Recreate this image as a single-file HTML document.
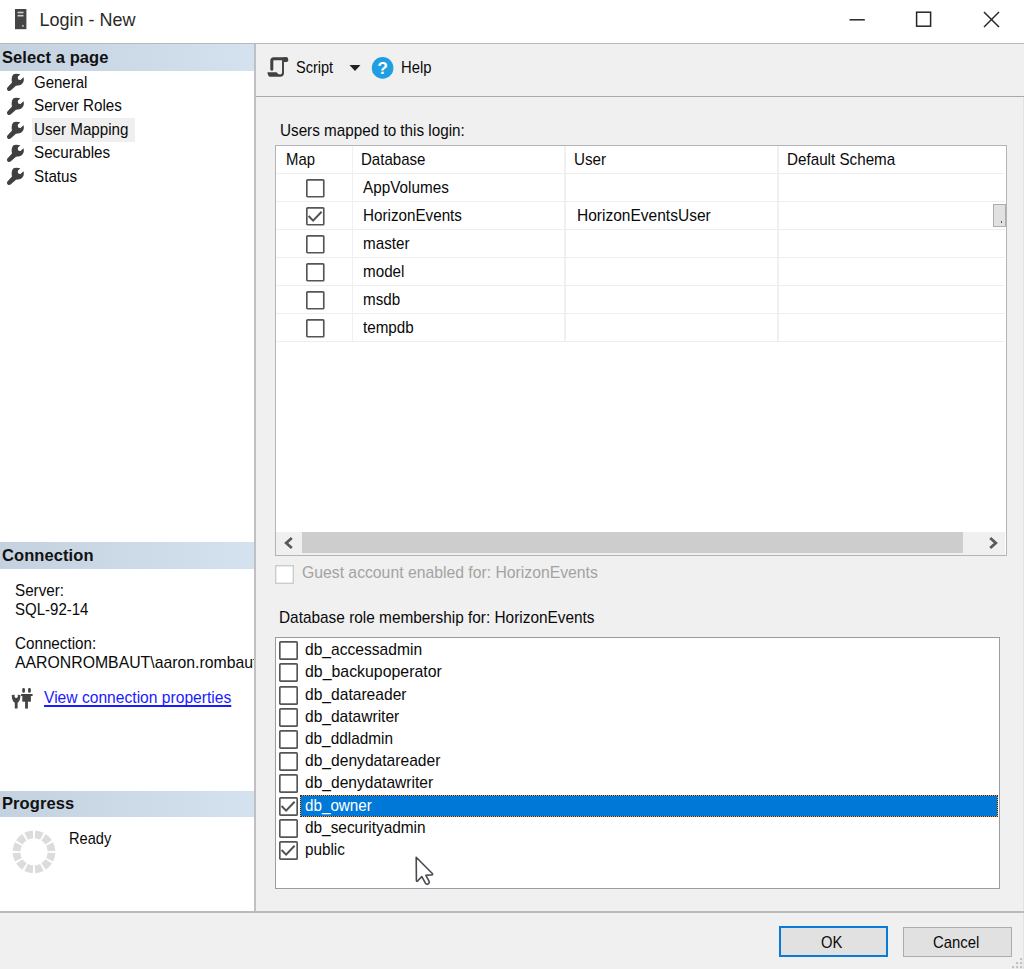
<!DOCTYPE html>
<html><head><meta charset="utf-8"><style>
html,body{margin:0;padding:0;width:1024px;height:969px;overflow:hidden;background:#f0f0f0;position:relative}
body *{position:absolute}
#root{left:0;top:0;width:1024px;height:969px;background:#f0f0f0}
.t{font-family:"Liberation Sans",sans-serif;white-space:nowrap}
svg{overflow:visible}
</style></head><body><div id="root">
<div style="left:0px;top:0px;width:1024px;height:43px;background:#fff"></div>
<div style="left:0px;top:43px;width:1024px;height:1px;background:#b9b9b9"></div>
<svg style="left:14px;top:9px" width="14" height="21" viewBox="0 0 14 21"><rect x="1" y="0" width="11.4" height="20.2" fill="#444"/><rect x="3.6" y="2.7" width="5.9" height="1.6" fill="#d0d0d0"/><rect x="3.6" y="5.9" width="5.9" height="1.6" fill="#d0d0d0"/><rect x="7.9" y="15.9" width="2" height="2" fill="#a0a0a0"/></svg>
<div class="t" style="left:39.5px;top:9.21px;font-size:18px;line-height:22.5px;letter-spacing:0px;color:#2a2a2a;">Login - New</div>
<svg style="left:840px;top:0px" width="184" height="43" viewBox="840 0 184 43"><line x1="849.5" y1="19.8" x2="864.8" y2="19.8" stroke="#262626" stroke-width="1.5"/><rect x="916.6" y="12.2" width="14" height="14" fill="none" stroke="#262626" stroke-width="1.5"/><line x1="984" y1="12" x2="999" y2="27" stroke="#262626" stroke-width="1.5"/><line x1="999" y1="12" x2="984" y2="27" stroke="#262626" stroke-width="1.5"/></svg>
<div style="left:0px;top:44px;width:254px;height:868px;background:#fff"></div>
<div style="left:254.2px;top:44px;width:1.7px;height:868px;background:#c0c0c4"></div>
<div style="left:0px;top:44px;width:254px;height:26.5px;background:linear-gradient(to right,#c4d1df,#d4e1ef)"></div>
<div class="t" style="left:2px;top:46.57px;font-size:16.5px;line-height:20.625px;letter-spacing:0.08px;color:#111;font-weight:bold;">Select a page</div>
<svg style="left:0px;top:68.00px" width="30" height="30" viewBox="0 68 30 30"><path d="M13.2 74.6 C14.5 73.5 17 73.4 20.4 74.3 L18 76.5 C17.2 78.5 18.5 80.5 20.5 80 L23.5 77.3 C24.5 80.5 23.5 84 19.5 85.3 L16 85.7 L10.6 90.6 C9.4 91.5 7.2 91 7 89.2 C6.9 88.3 7.3 87.4 7.9 86.9 L12 82.6 C11.4 80 11.5 76.6 13.2 74.6 Z" fill="#404040"/></svg>
<div class="t" style="left:34px;top:71.58px;font-size:17px;line-height:21.25px;letter-spacing:0px;color:#0a0a0a;transform:scaleX(0.883);transform-origin:0 0;">General</div>
<svg style="left:0px;top:91.70px" width="30" height="30" viewBox="0 68 30 30"><path d="M13.2 74.6 C14.5 73.5 17 73.4 20.4 74.3 L18 76.5 C17.2 78.5 18.5 80.5 20.5 80 L23.5 77.3 C24.5 80.5 23.5 84 19.5 85.3 L16 85.7 L10.6 90.6 C9.4 91.5 7.2 91 7 89.2 C6.9 88.3 7.3 87.4 7.9 86.9 L12 82.6 C11.4 80 11.5 76.6 13.2 74.6 Z" fill="#404040"/></svg>
<div class="t" style="left:34px;top:95.28px;font-size:17px;line-height:21.25px;letter-spacing:0px;color:#0a0a0a;transform:scaleX(0.895);transform-origin:0 0;">Server Roles</div>
<div style="left:31.5px;top:118.3px;width:103.5px;height:23.4px;background:#efefef"></div>
<svg style="left:0px;top:115.60px" width="30" height="30" viewBox="0 68 30 30"><path d="M13.2 74.6 C14.5 73.5 17 73.4 20.4 74.3 L18 76.5 C17.2 78.5 18.5 80.5 20.5 80 L23.5 77.3 C24.5 80.5 23.5 84 19.5 85.3 L16 85.7 L10.6 90.6 C9.4 91.5 7.2 91 7 89.2 C6.9 88.3 7.3 87.4 7.9 86.9 L12 82.6 C11.4 80 11.5 76.6 13.2 74.6 Z" fill="#404040"/></svg>
<div class="t" style="left:34px;top:119.18px;font-size:17px;line-height:21.25px;letter-spacing:0px;color:#0a0a0a;transform:scaleX(0.893);transform-origin:0 0;">User Mapping</div>
<svg style="left:0px;top:138.90px" width="30" height="30" viewBox="0 68 30 30"><path d="M13.2 74.6 C14.5 73.5 17 73.4 20.4 74.3 L18 76.5 C17.2 78.5 18.5 80.5 20.5 80 L23.5 77.3 C24.5 80.5 23.5 84 19.5 85.3 L16 85.7 L10.6 90.6 C9.4 91.5 7.2 91 7 89.2 C6.9 88.3 7.3 87.4 7.9 86.9 L12 82.6 C11.4 80 11.5 76.6 13.2 74.6 Z" fill="#404040"/></svg>
<div class="t" style="left:34px;top:142.48px;font-size:17px;line-height:21.25px;letter-spacing:0px;color:#0a0a0a;transform:scaleX(0.895);transform-origin:0 0;">Securables</div>
<svg style="left:0px;top:162.40px" width="30" height="30" viewBox="0 68 30 30"><path d="M13.2 74.6 C14.5 73.5 17 73.4 20.4 74.3 L18 76.5 C17.2 78.5 18.5 80.5 20.5 80 L23.5 77.3 C24.5 80.5 23.5 84 19.5 85.3 L16 85.7 L10.6 90.6 C9.4 91.5 7.2 91 7 89.2 C6.9 88.3 7.3 87.4 7.9 86.9 L12 82.6 C11.4 80 11.5 76.6 13.2 74.6 Z" fill="#404040"/></svg>
<div class="t" style="left:34px;top:165.98px;font-size:17px;line-height:21.25px;letter-spacing:0px;color:#0a0a0a;transform:scaleX(0.895);transform-origin:0 0;">Status</div>
<div style="left:0px;top:542px;width:254px;height:26.5px;background:linear-gradient(to right,#c4d1df,#d4e1ef)"></div>
<div class="t" style="left:2px;top:545.07px;font-size:16.5px;line-height:20.625px;letter-spacing:0.08px;color:#111;font-weight:bold;">Connection</div>
<div class="t" style="left:15px;top:580.08px;font-size:17px;line-height:21.25px;letter-spacing:0px;color:#0a0a0a;transform:scaleX(0.895);transform-origin:0 0;">Server:</div>
<div class="t" style="left:15px;top:599.18px;font-size:17px;line-height:21.25px;letter-spacing:0px;color:#0a0a0a;transform:scaleX(0.883);transform-origin:0 0;">SQL-92-14</div>
<div class="t" style="left:15px;top:632.88px;font-size:17px;line-height:21.25px;letter-spacing:0px;color:#0a0a0a;transform:scaleX(0.895);transform-origin:0 0;">Connection:</div>
<div style="left:0;top:650px;width:254px;height:30px;overflow:hidden">
<div class="t" style="left:15px;top:1.88px;font-size:17px;line-height:21.25px;letter-spacing:0px;color:#0a0a0a;transform:scaleX(0.93);transform-origin:0 0;">AARONROMBAUT\aaron.rombaut</div>
</div>
<svg style="left:6px;top:682px" width="34" height="32" viewBox="6 682 34 32"><path d="M11.8 695 L14.6 694.8 L14.6 697 Q16.2 699.2 17.8 697 L17.8 694.8 L20.4 695 C20.6 699 19.2 701.8 17.6 702.8 L17.6 708.6 L14.8 708.6 L14.8 702.8 C13 701.8 11.6 699 11.8 695 Z" fill="#444"/><rect x="22.3" y="688.1" width="2.6" height="4.6" rx="1.2" fill="#444"/><rect x="28.1" y="688.1" width="2.7" height="4.6" rx="1.2" fill="#444"/><rect x="21.1" y="694" width="11.5" height="2" fill="#444"/><rect x="22.3" y="695.5" width="8.6" height="6.2" fill="#444"/><rect x="25.1" y="701" width="2.8" height="7.6" fill="#444"/></svg>
<div class="t" style="left:44.4px;top:686.58px;font-size:17px;line-height:21.25px;letter-spacing:0px;color:#1a1aff;transform:scaleX(0.919);transform-origin:0 0;text-decoration:underline;text-underline-offset:2.2px;text-decoration-thickness:1.6px;text-decoration-skip-ink:none">View connection properties</div>
<div style="left:0px;top:790.5px;width:254px;height:26.100000000000023px;background:linear-gradient(to right,#c4d1df,#d4e1ef)"></div>
<div class="t" style="left:2px;top:793.17px;font-size:16.5px;line-height:20.625px;letter-spacing:0.08px;color:#111;font-weight:bold;">Progress</div>
<svg style="left:0;top:820px" width="70" height="70" viewBox="0 820 70 70"><path d="M55.37 853.09 A21.4 21.4 0 0 1 53.10 861.55 L46.14 858.03 A13.6 13.6 0 0 0 47.58 852.66 Z" fill="#dcdcdc"/><path d="M51.91 863.62 A21.4 21.4 0 0 1 45.72 869.81 L41.45 863.28 A13.6 13.6 0 0 0 45.38 859.35 Z" fill="#dcdcdc"/><path d="M43.65 871.00 A21.4 21.4 0 0 1 35.19 873.27 L34.76 865.48 A13.6 13.6 0 0 0 40.13 864.04 Z" fill="#dcdcdc"/><path d="M32.81 873.27 A21.4 21.4 0 0 1 24.35 871.00 L27.87 864.04 A13.6 13.6 0 0 0 33.24 865.48 Z" fill="#dcdcdc"/><path d="M22.28 869.81 A21.4 21.4 0 0 1 16.09 863.62 L22.62 859.35 A13.6 13.6 0 0 0 26.55 863.28 Z" fill="#dcdcdc"/><path d="M14.90 861.55 A21.4 21.4 0 0 1 12.63 853.09 L20.42 852.66 A13.6 13.6 0 0 0 21.86 858.03 Z" fill="#dcdcdc"/><path d="M12.63 850.71 A21.4 21.4 0 0 1 14.90 842.25 L21.86 845.77 A13.6 13.6 0 0 0 20.42 851.14 Z" fill="#dcdcdc"/><path d="M16.09 840.18 A21.4 21.4 0 0 1 22.28 833.99 L26.55 840.52 A13.6 13.6 0 0 0 22.62 844.45 Z" fill="#dcdcdc"/><path d="M24.35 832.80 A21.4 21.4 0 0 1 32.81 830.53 L33.24 838.32 A13.6 13.6 0 0 0 27.87 839.76 Z" fill="#dcdcdc"/><path d="M35.19 830.53 A21.4 21.4 0 0 1 43.65 832.80 L40.13 839.76 A13.6 13.6 0 0 0 34.76 838.32 Z" fill="#dcdcdc"/><path d="M45.72 833.99 A21.4 21.4 0 0 1 51.91 840.18 L45.38 844.45 A13.6 13.6 0 0 0 41.45 840.52 Z" fill="#dcdcdc"/><path d="M53.10 842.25 A21.4 21.4 0 0 1 55.37 850.71 L47.58 851.14 A13.6 13.6 0 0 0 46.14 845.77 Z" fill="#dcdcdc"/></svg>
<div class="t" style="left:68.6px;top:828.18px;font-size:17px;line-height:21.25px;letter-spacing:0px;color:#0a0a0a;transform:scaleX(0.86);transform-origin:0 0;">Ready</div>
<div style="left:255.5px;top:44px;width:768.5px;height:52px;background:#f0f0f0"></div>
<div style="left:255.5px;top:96px;width:768.5px;height:1.2px;background:#a9a9a9"></div>
<svg style="left:262px;top:52px" width="34" height="30" viewBox="262 52 34 30"><path d="M271.8 69.3 L271.8 60.8 Q271.8 58.8 273.8 58.8 L286 58.8" fill="none" stroke="#404040" stroke-width="3" stroke-linecap="round"/><rect x="282.6" y="57.3" width="5.6" height="4.6" rx="1.6" fill="#404040"/><path d="M283 60 L283 73" fill="none" stroke="#474747" stroke-width="2"/><path d="M267.4 72.2 L276.6 72.2 Q277.8 74.6 280.2 74.6 Q282 74.6 282 72.5 L284 72.5 Q284 76.8 280 76.8 L270.2 76.8 Q268 76.8 267.4 72.2 Z" fill="#404040"/></svg>
<div class="t" style="left:296px;top:57.08px;font-size:17px;line-height:21.25px;letter-spacing:0px;color:#0a0a0a;transform:scaleX(0.855);transform-origin:0 0;">Script</div>
<svg style="left:348px;top:64px" width="14" height="8" viewBox="0 0 14 8"><path d="M1.5 1 L12.5 1 L7 7 Z" fill="#222"/></svg>
<svg style="left:371px;top:57px" width="23" height="23" viewBox="0 0 23 23"><circle cx="11.6" cy="10.9" r="10.8" fill="#1f9fe2"/><text x="11.8" y="17.3" text-anchor="middle" font-family="Liberation Sans" font-weight="bold" font-size="17" fill="#fff">?</text></svg>
<div class="t" style="left:400.5px;top:57.08px;font-size:17px;line-height:21.25px;letter-spacing:0px;color:#0a0a0a;transform:scaleX(0.87);transform-origin:0 0;">Help</div>
<div class="t" style="left:280.4px;top:120.18px;font-size:17px;line-height:21.25px;letter-spacing:0px;color:#0a0a0a;transform:scaleX(0.897);transform-origin:0 0;">Users mapped to this login:</div>
<div style="left:274.8px;top:144.6px;width:732.0px;height:411.79999999999995px;background:#fff"></div>
<div style="left:276.1px;top:172.8px;width:729.4px;height:1.4px;background:#eeeeee"></div>
<div style="left:276.1px;top:200.8px;width:729.4px;height:1.4px;background:#eeeeee"></div>
<div style="left:276.1px;top:228.8px;width:729.4px;height:1.4px;background:#eeeeee"></div>
<div style="left:276.1px;top:256.8px;width:729.4px;height:1.4px;background:#eeeeee"></div>
<div style="left:276.1px;top:284.8px;width:729.4px;height:1.4px;background:#eeeeee"></div>
<div style="left:276.1px;top:312.8px;width:729.4px;height:1.4px;background:#eeeeee"></div>
<div style="left:276.1px;top:340.8px;width:729.4px;height:1.4px;background:#eeeeee"></div>
<div style="left:351.9px;top:145.9px;width:1.2px;height:195.6px;background:#f0f0f0"></div>
<div style="left:564.4px;top:145.9px;width:1.2px;height:195.6px;background:#f0f0f0"></div>
<div style="left:777.4px;top:145.9px;width:1.2px;height:195.6px;background:#f0f0f0"></div>
<div class="t" style="left:285.5px;top:148.68px;font-size:17px;line-height:21.25px;letter-spacing:0px;color:#0a0a0a;transform:scaleX(0.876);transform-origin:0 0;">Map</div>
<div class="t" style="left:361.2px;top:148.68px;font-size:17px;line-height:21.25px;letter-spacing:0px;color:#0a0a0a;transform:scaleX(0.885);transform-origin:0 0;">Database</div>
<div class="t" style="left:574px;top:148.68px;font-size:17px;line-height:21.25px;letter-spacing:0px;color:#0a0a0a;transform:scaleX(0.895);transform-origin:0 0;">User</div>
<div class="t" style="left:786.6px;top:148.68px;font-size:17px;line-height:21.25px;letter-spacing:0px;color:#0a0a0a;transform:scaleX(0.895);transform-origin:0 0;">Default Schema</div>
<svg style="left:306.2px;top:178.8px" width="18.6" height="18.6" viewBox="0 0 18.6 18.6"><rect x="0.825" y="0.825" width="16.950000000000003" height="16.950000000000003" rx="0.8" fill="none" stroke="#555" stroke-width="1.65"/></svg>
<div class="t" style="left:363px;top:176.88px;font-size:17px;line-height:21.25px;letter-spacing:0px;color:#0a0a0a;transform:scaleX(0.899);transform-origin:0 0;">AppVolumes</div>
<svg style="left:306.2px;top:206.8px" width="18.6" height="18.6" viewBox="0 0 18.6 18.6"><rect x="0.825" y="0.825" width="16.950000000000003" height="16.950000000000003" rx="0.8" fill="none" stroke="#555" stroke-width="1.65"/><path d="M2.6 9 L7.1 13.6 L15.6 4.8" fill="none" stroke="#505050" stroke-width="2"/></svg>
<div class="t" style="left:363px;top:204.88px;font-size:17px;line-height:21.25px;letter-spacing:0px;color:#0a0a0a;transform:scaleX(0.895);transform-origin:0 0;">HorizonEvents</div>
<div class="t" style="left:576.6px;top:204.88px;font-size:17px;line-height:21.25px;letter-spacing:0px;color:#0a0a0a;transform:scaleX(0.913);transform-origin:0 0;">HorizonEventsUser</div>
<div style="left:993.3px;top:204.2px;width:12.5px;height:22.5px;background:#e1e1e1;border:1.2px solid #adadad;box-sizing:border-box"></div>
<div style="left:1000.5px;top:221.0px;width:1.5px;height:1.5px;background:#555"></div>
<svg style="left:306.2px;top:234.8px" width="18.6" height="18.6" viewBox="0 0 18.6 18.6"><rect x="0.825" y="0.825" width="16.950000000000003" height="16.950000000000003" rx="0.8" fill="none" stroke="#555" stroke-width="1.65"/></svg>
<div class="t" style="left:363px;top:232.88px;font-size:17px;line-height:21.25px;letter-spacing:0px;color:#0a0a0a;transform:scaleX(0.895);transform-origin:0 0;">master</div>
<svg style="left:306.2px;top:262.8px" width="18.6" height="18.6" viewBox="0 0 18.6 18.6"><rect x="0.825" y="0.825" width="16.950000000000003" height="16.950000000000003" rx="0.8" fill="none" stroke="#555" stroke-width="1.65"/></svg>
<div class="t" style="left:363px;top:260.88px;font-size:17px;line-height:21.25px;letter-spacing:0px;color:#0a0a0a;transform:scaleX(0.895);transform-origin:0 0;">model</div>
<svg style="left:306.2px;top:290.8px" width="18.6" height="18.6" viewBox="0 0 18.6 18.6"><rect x="0.825" y="0.825" width="16.950000000000003" height="16.950000000000003" rx="0.8" fill="none" stroke="#555" stroke-width="1.65"/></svg>
<div class="t" style="left:363px;top:288.88px;font-size:17px;line-height:21.25px;letter-spacing:0px;color:#0a0a0a;transform:scaleX(0.895);transform-origin:0 0;">msdb</div>
<svg style="left:306.2px;top:318.8px" width="18.6" height="18.6" viewBox="0 0 18.6 18.6"><rect x="0.825" y="0.825" width="16.950000000000003" height="16.950000000000003" rx="0.8" fill="none" stroke="#555" stroke-width="1.65"/></svg>
<div class="t" style="left:363px;top:316.88px;font-size:17px;line-height:21.25px;letter-spacing:0px;color:#0a0a0a;transform:scaleX(0.895);transform-origin:0 0;">tempdb</div>
<div style="left:276.1px;top:531.8px;width:729.4px;height:23px;background:#f0f0f0"></div>
<div style="left:301.6px;top:532.3px;width:661.4px;height:21.2px;background:#cdcdcd"></div>
<svg style="left:281px;top:535px" width="16" height="16" viewBox="0 0 16 16"><path d="M10.8 3 L5.2 8 L10.8 13" fill="none" stroke="#5a5a5a" stroke-width="2.8"/></svg>
<svg style="left:985px;top:535px" width="16" height="16" viewBox="0 0 16 16"><path d="M5.2 3 L10.8 8 L5.2 13" fill="none" stroke="#5a5a5a" stroke-width="2.8"/></svg>
<div style="left:274.8px;top:144.6px;width:732.0px;height:411.79999999999995px;border:1.6px solid #b3b3b8;box-sizing:border-box"></div>
<svg style="left:275px;top:564.5px" width="19" height="19" viewBox="0 0 19 19"><rect x="0.7" y="0.7" width="17.6" height="17.6" fill="#fff" stroke="#cccccc" stroke-width="1.4"/></svg>
<div class="t" style="left:302px;top:561.98px;font-size:17px;line-height:21.25px;letter-spacing:0px;color:#a3a3a3;transform:scaleX(0.926);transform-origin:0 0;">Guest account enabled for: HorizonEvents</div>
<div class="t" style="left:279.4px;top:606.68px;font-size:17px;line-height:21.25px;letter-spacing:0px;color:#0a0a0a;transform:scaleX(0.905);transform-origin:0 0;">Database role membership for: HorizonEvents</div>
<div style="left:275px;top:637px;width:725.4px;height:252.20000000000005px;background:#fff;border:1.5px solid #9a9ca4;box-sizing:border-box"></div>
<div class="t" style="left:304.6px;top:639.18px;font-size:17px;line-height:21.25px;letter-spacing:0px;color:#0a0a0a;transform:scaleX(0.918);transform-origin:0 0;">db_accessadmin</div>
<svg style="left:279.3px;top:641.3px" width="19" height="19" viewBox="0 0 19 19"><rect x="0.825" y="0.825" width="17.35" height="17.35" rx="0.8" fill="none" stroke="#555" stroke-width="1.65"/></svg>
<div class="t" style="left:304.6px;top:661.37px;font-size:17px;line-height:21.25px;letter-spacing:0px;color:#0a0a0a;transform:scaleX(0.934);transform-origin:0 0;">db_backupoperator</div>
<svg style="left:279.3px;top:663.49px" width="19" height="19" viewBox="0 0 19 19"><rect x="0.825" y="0.825" width="17.35" height="17.35" rx="0.8" fill="none" stroke="#555" stroke-width="1.65"/></svg>
<div class="t" style="left:304.6px;top:683.56px;font-size:17px;line-height:21.25px;letter-spacing:0px;color:#0a0a0a;transform:scaleX(0.918);transform-origin:0 0;">db_datareader</div>
<svg style="left:279.3px;top:685.68px" width="19" height="19" viewBox="0 0 19 19"><rect x="0.825" y="0.825" width="17.35" height="17.35" rx="0.8" fill="none" stroke="#555" stroke-width="1.65"/></svg>
<div class="t" style="left:304.6px;top:705.75px;font-size:17px;line-height:21.25px;letter-spacing:0px;color:#0a0a0a;transform:scaleX(0.915);transform-origin:0 0;">db_datawriter</div>
<svg style="left:279.3px;top:707.87px" width="19" height="19" viewBox="0 0 19 19"><rect x="0.825" y="0.825" width="17.35" height="17.35" rx="0.8" fill="none" stroke="#555" stroke-width="1.65"/></svg>
<div class="t" style="left:304.6px;top:727.94px;font-size:17px;line-height:21.25px;letter-spacing:0px;color:#0a0a0a;transform:scaleX(0.904);transform-origin:0 0;">db_ddladmin</div>
<svg style="left:279.3px;top:730.06px" width="19" height="19" viewBox="0 0 19 19"><rect x="0.825" y="0.825" width="17.35" height="17.35" rx="0.8" fill="none" stroke="#555" stroke-width="1.65"/></svg>
<div class="t" style="left:304.6px;top:750.13px;font-size:17px;line-height:21.25px;letter-spacing:0px;color:#0a0a0a;transform:scaleX(0.918);transform-origin:0 0;">db_denydatareader</div>
<svg style="left:279.3px;top:752.25px" width="19" height="19" viewBox="0 0 19 19"><rect x="0.825" y="0.825" width="17.35" height="17.35" rx="0.8" fill="none" stroke="#555" stroke-width="1.65"/></svg>
<div class="t" style="left:304.6px;top:772.32px;font-size:17px;line-height:21.25px;letter-spacing:0px;color:#0a0a0a;transform:scaleX(0.916);transform-origin:0 0;">db_denydatawriter</div>
<svg style="left:279.3px;top:774.4399999999999px" width="19" height="19" viewBox="0 0 19 19"><rect x="0.825" y="0.825" width="17.35" height="17.35" rx="0.8" fill="none" stroke="#555" stroke-width="1.65"/></svg>
<div style="left:300.2px;top:794.7px;width:697.7px;height:22.2px;background:#e4a060"></div>
<div style="left:300.2px;top:794.7px;width:697.7px;height:22.2px;background:#0078d7;background-clip:padding-box;border:1.3px dotted #2c2c2c;box-sizing:border-box"></div>
<div class="t" style="left:304.6px;top:794.51px;font-size:17px;line-height:21.25px;letter-spacing:0px;color:#fff;transform:scaleX(0.895);transform-origin:0 0;">db_owner</div>
<svg style="left:279.3px;top:796.63px" width="19" height="19" viewBox="0 0 19 19"><rect x="0.825" y="0.825" width="17.35" height="17.35" rx="0.8" fill="none" stroke="#555" stroke-width="1.65"/><path d="M2.6 9 L7.1 13.6 L15.6 4.8" fill="none" stroke="#505050" stroke-width="2"/></svg>
<div class="t" style="left:304.6px;top:816.70px;font-size:17px;line-height:21.25px;letter-spacing:0px;color:#0a0a0a;transform:scaleX(0.905);transform-origin:0 0;">db_securityadmin</div>
<svg style="left:279.3px;top:818.8199999999999px" width="19" height="19" viewBox="0 0 19 19"><rect x="0.825" y="0.825" width="17.35" height="17.35" rx="0.8" fill="none" stroke="#555" stroke-width="1.65"/></svg>
<div class="t" style="left:304.6px;top:838.89px;font-size:17px;line-height:21.25px;letter-spacing:0px;color:#0a0a0a;transform:scaleX(0.898);transform-origin:0 0;">public</div>
<svg style="left:279.3px;top:841.01px" width="19" height="19" viewBox="0 0 19 19"><rect x="0.825" y="0.825" width="17.35" height="17.35" rx="0.8" fill="none" stroke="#555" stroke-width="1.65"/><path d="M2.6 9 L7.1 13.6 L15.6 4.8" fill="none" stroke="#505050" stroke-width="2"/></svg>
<svg style="left:400px;top:845px" width="50" height="50" viewBox="400 845 50 50"><path d="M416.2 857.3 L416.4 880.3 Q416.6 881.8 417.8 880.8 L421.8 876.6 L425.6 883.4 Q426.5 884.7 427.9 884 L428.7 883.5 Q429.7 882.7 429.1 881.4 L425.9 875.3 L431.9 874.9 Q433.1 874.5 432.3 873.5 Z" fill="#fff" stroke="#4a4a52" stroke-width="1.6" stroke-linejoin="round"/></svg>
<div style="left:1023px;top:97px;width:1px;height:872px;background:#e3e3e3"></div>
<div style="left:0px;top:911.3px;width:1024px;height:1.6px;background:#bababa"></div>
<div style="left:778.7px;top:926px;width:109.5px;height:31px;background:#e1e1e1;border:2.7px solid #0a7ad8;box-sizing:border-box"></div>
<div class="t" style="left:820.5px;top:932.28px;font-size:17px;line-height:21.25px;letter-spacing:0px;color:#0a0a0a;transform:scaleX(0.87);transform-origin:0 0;">OK</div>
<div style="left:903px;top:927px;width:109px;height:29.5px;background:#e1e1e1;border:1.3px solid #adadad;box-sizing:border-box"></div>
<div class="t" style="left:932.6px;top:932.28px;font-size:17px;line-height:21.25px;letter-spacing:0px;color:#0a0a0a;transform:scaleX(0.875);transform-origin:0 0;">Cancel</div>
<svg style="left:1012px;top:956px" width="12" height="13"><rect x="8" y="2" width="2.2" height="2.2" fill="#c2c2c2"/><rect x="4" y="6" width="2.2" height="2.2" fill="#c2c2c2"/><rect x="8" y="6" width="2.2" height="2.2" fill="#c2c2c2"/><rect x="0" y="10" width="2.2" height="2.2" fill="#c2c2c2"/><rect x="4" y="10" width="2.2" height="2.2" fill="#c2c2c2"/><rect x="8" y="10" width="2.2" height="2.2" fill="#c2c2c2"/></svg>
</div></body></html>
